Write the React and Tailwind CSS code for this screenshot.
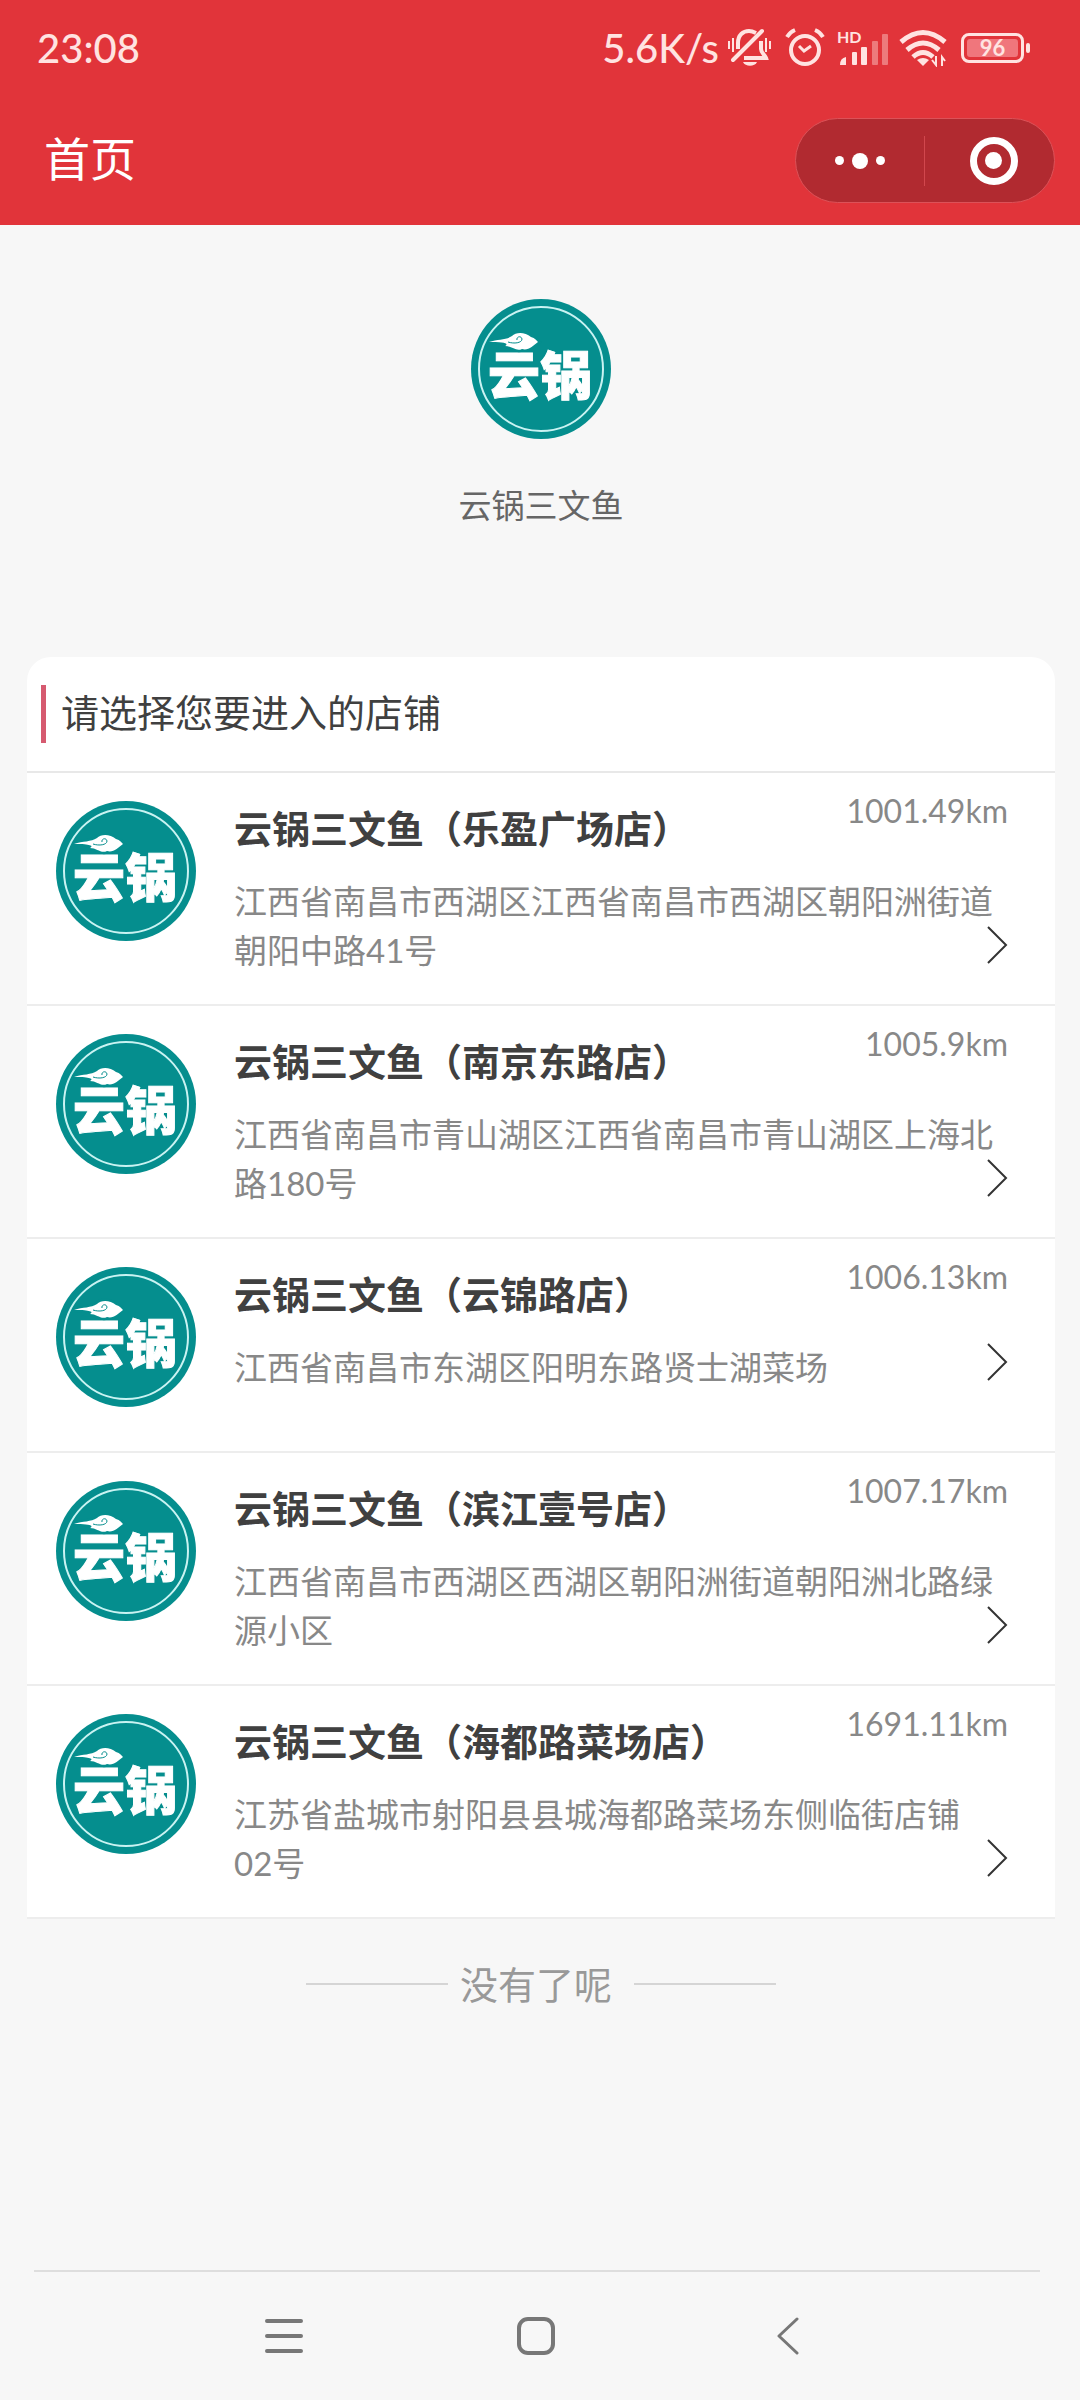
const shops = [
  { name: "云锅三文鱼（乐盈广场店）", address: "江西省南昌市西湖区江西省南昌市西湖区朝阳洲街道朝阳中路41号", distance: "1001.49km" },
  { name: "云锅三文鱼（南京东路店）", address: "江西省南昌市青山湖区江西省南昌市青山湖区上海北路180号", distance: "1005.9km" },
  { name: "云锅三文鱼（云锦路店）", address: "江西省南昌市东湖区阳明东路贤士湖菜场", distance: "1006.13km" },
  { name: "云锅三文鱼（滨江壹号店）", address: "江西省南昌市西湖区西湖区朝阳洲街道朝阳洲北路绿源小区", distance: "1007.17km" },
  { name: "云锅三文鱼（海都路菜场店）", address: "江苏省盐城市射阳县县城海都路菜场东侧临街店铺02号", distance: "1691.11km" },
];

function BrandLogo({ className }) {
  return (
    <svg viewBox="0 0 140 140" className={className} role="img" aria-label="云锅">
      <circle cx="70" cy="70" r="70" fill="#058e8e" />
      <circle cx="70" cy="70" r="62" fill="none" stroke="#c9f3f2" strokeWidth="2" />
      <g fill="#fff" stroke="#fff" strokeWidth="1" className="font-['Noto_Sans_CJK_SC',sans-serif] text-[52px] font-black">
        <text x="17" y="96">云</text>
        <text x="69" y="96">锅</text>
      </g>
      <path d="M18 43 C27 40 35 41 41 37 C45 33 54 33 60 38 C64 39 66 42 67 43 C62 47 57 52 51 50 C45 53 41 47 34 47 C39 44 31 43 18 43Z" fill="#fff" stroke="#058e8e" strokeWidth="5" paintOrder="stroke" />
      <path d="M37 43 C43 45 51 44 51 40 C50 36 45 38 46 41" fill="none" stroke="#058e8e" strokeWidth="1" />
    </svg>
  );
}

function StatusIcons() {
  return (
    <div className="flex items-center text-[#ffe3e1]">
      <svg width="46" height="40" viewBox="0 0 46 40" fill="none" stroke="currentColor" strokeWidth="4" aria-label="静音">
        <path d="M35 3 L6 32" strokeLinecap="round" />
        <path d="M11 21 V15 C11 7 16 3 22 3 C25 3 27 4 29 5" />
        <path d="M34 13 V21 C34 25 38 27 39 30 H17" />
        <path d="M16 34 H30 C28 39 18 39 16 34Z" fill="currentColor" stroke="none" />
        <path d="M2 13 V21 M6 10 V24 M39 10 V24 M43 13 V21" strokeWidth="2" />
      </svg>
      <svg width="40" height="40" viewBox="0 0 40 40" fill="none" stroke="currentColor" strokeWidth="4" className="ml-3" aria-label="闹钟">
        <circle cx="20" cy="22" r="14" />
        <path d="M14 18 L19 23 L26 18" strokeWidth="3" />
        <path d="M2 9 Q5 4 10 2 M30 2 Q35 4 38 9" />
      </svg>
      <svg width="52" height="44" viewBox="0 -4 52 44" fill="currentColor" className="ml-3" aria-label="信号">
        <text x="0" y="13" fontSize="16" className="font-['Lato',sans-serif] font-bold">HD</text>
        <path d="M3 35 Q3 28 9 27 V35Z" />
        <rect x="15" y="22" width="5" height="13" rx="1" />
        <rect x="24" y="17" width="6" height="18" rx="1" />
        <rect x="35" y="11" width="6" height="24" rx="1" opacity=".4" />
        <rect x="45" y="4" width="6" height="31" rx="1" opacity=".4" />
      </svg>
      <svg width="48" height="38" viewBox="0 0 48 38" fill="none" stroke="currentColor" strokeWidth="5" className="ml-[10px]" aria-label="无线网络">
        <path d="M2 13 Q24 -6 46 13" />
        <path d="M8 21 Q24 7 40 21" />
        <path d="M14 28 Q24 19 34 28" />
        <path d="M18 31 Q24 27 30 31 L24 37Z" fill="currentColor" stroke="none" />
        <path d="M37 27 V36 L33 31 M43 37 V28 L46 32" strokeWidth="2" />
      </svg>
      <div className="ml-[14px] flex items-center">
        <div className="flex h-[30px] w-[63px] items-center justify-center rounded-lg border-[3px] border-[#ffe3e1] p-[3px]">
          <span className="flex h-[18px] w-full items-center justify-center rounded-[3px] bg-[#f0767c] text-[22px] leading-none font-bold">96</span>
        </div>
        <span className="ml-[2px] h-[10px] w-[4px] rounded-sm bg-[#ffe3e1]" />
      </div>
    </div>
  );
}

function ShopRow({ shop }) {
  return (
    <li className="border-b-2 border-[#ededed]">
      <a href="#" className="flex min-h-[212px] items-start pt-[28px] pr-[47px] pb-[29px] pl-[29px]">
        <BrandLogo className="size-[140px] shrink-0" />
        <div className="ml-[38px] min-w-0 flex-1">
          <div className="flex items-start justify-between">
            <h2 className="text-[38px] leading-[54px] font-bold text-[#404040]">{shop.name}</h2>
            <span className="-mt-[10px] text-[32px] leading-[40px] text-[#888]">{shop.distance}</span>
          </div>
          <div className="relative mt-[22px] pr-3">
            <p className="text-[33px] leading-[49px] text-[#888]">{shop.address}</p>
            <svg width="22" height="38" viewBox="0 0 22 38" fill="none" stroke="#333" strokeWidth="2" className="absolute right-0 bottom-[11px]" aria-hidden="true">
              <path d="M2 1 L20 19 L2 37" />
            </svg>
          </div>
        </div>
      </a>
    </li>
  );
}

export default function App() {
  return (
    <div className="flex min-h-screen flex-col bg-[#f7f7f7] font-['Lato','Noto_Sans_CJK_SC',sans-serif]">
      <header className="bg-[#e1343a] pb-[22px] text-white">
        <div className="flex h-24 items-center justify-between pr-[50px] pl-[37px] text-[40px] text-[#ffe3e1]">
          <time className="font-medium">23:08</time>
          <div className="flex items-center">
            <span className="mr-2 font-medium">5.6K/s</span>
            <StatusIcons />
          </div>
        </div>
        <div className="mt-[22px] flex items-center justify-between pr-[25px] pl-[44px]">
          <h1 className="pb-1 text-[46px] leading-[64px]">首页</h1>
          <div className="flex h-[85px] w-[260px] items-center rounded-full border border-[#dc5258] bg-[#b12a30]">
            <button type="button" aria-label="更多" className="flex w-[128px] items-center justify-center gap-2">
              <span className="size-[9px] rounded-full bg-white" />
              <span className="size-4 rounded-full bg-white" />
              <span className="size-[9px] rounded-full bg-white" />
            </button>
            <span className="h-[50px] w-px bg-[#d2474d]" />
            <button type="button" aria-label="关闭" className="flex flex-1 justify-center pl-2">
              <span className="flex size-12 items-center justify-center rounded-full border-[7px] border-white">
                <span className="size-[17px] rounded-full bg-white" />
              </span>
            </button>
          </div>
        </div>
      </header>

      <main className="flex-1 pr-[25px] pl-[27px]">
        <section className="flex flex-col items-center pt-[74px] pb-[128px]">
          <BrandLogo className="size-[140px]" />
          <p className="mt-[42px] text-[33px] leading-[48px] text-[#666]">云锅三文鱼</p>
        </section>

        <section className="rounded-t-[24px] bg-white">
          <div className="flex h-[116px] items-center border-b-2 border-[#e8e8e8] pl-[14px]">
            <span className="h-[58px] w-[5px] bg-[#d65a70]" />
            <p className="ml-[15px] pb-1 text-[38px] leading-[56px] text-[#404040]">请选择您要进入的店铺</p>
          </div>
          <ul>
            {shops.map((shop) => (
              <ShopRow key={shop.name} shop={shop} />
            ))}
          </ul>
        </section>

        <div className="mt-[37px] flex items-center justify-center">
          <span className="h-[2px] w-[142px] bg-[#d5d5d5]" />
          <p className="pr-[22px] pl-3 text-[38px] leading-[56px] text-[#999]">没有了呢</p>
          <span className="h-[2px] w-[142px] bg-[#d5d5d5]" />
        </div>
      </main>

      <nav className="pr-[40px] pl-[34px]">
        <div className="flex h-[130px] items-center justify-between border-t-2 border-[#dedede] pr-[233px] pl-[231px]">
          <button type="button" aria-label="最近任务">
            <svg width="38" height="38" viewBox="0 0 38 38" stroke="#777" strokeWidth="4" strokeLinecap="round"><path d="M2 4 H36 M2 19 H36 M2 34 H36" /></svg>
          </button>
          <button type="button" aria-label="主屏幕">
            <svg width="38" height="38" viewBox="0 0 38 38" fill="none" stroke="#777" strokeWidth="4"><rect x="2" y="2" width="34" height="34" rx="9" /></svg>
          </button>
          <button type="button" aria-label="返回">
            <svg width="38" height="38" viewBox="0 0 38 38" fill="none" stroke="#777" strokeWidth="3" strokeLinecap="round" strokeLinejoin="round"><path d="M28 2 L10 19 L28 36" /></svg>
          </button>
        </div>
      </nav>
    </div>
  );
}
